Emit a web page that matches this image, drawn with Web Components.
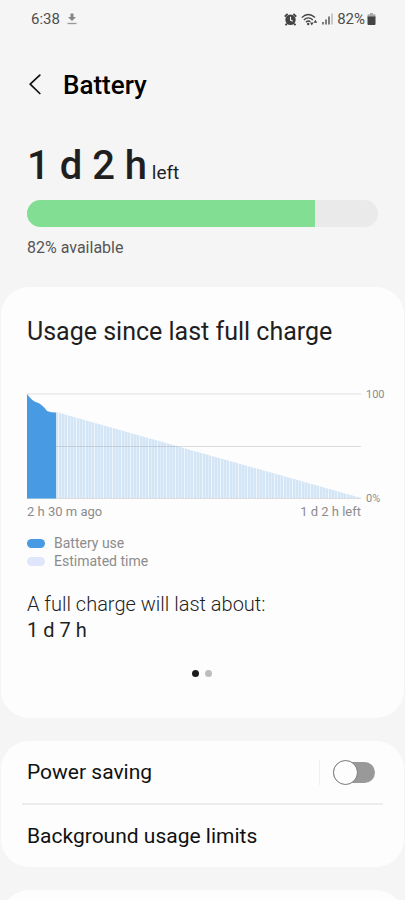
<!DOCTYPE html>
<html lang="en">
<head>
<meta charset="utf-8">
<meta name="viewport" content="width=device-width, initial-scale=1">
<title>Battery</title>
<style>
  body { margin: 0; background: #f5f5f5; color: #1f1f1f; font-family: Roboto, "Liberation Sans", sans-serif; }
</style>
</head>
<body>
<battery-page></battery-page>
<script>
  const define = (name, html, setup) => {
    const template = document.createElement('template');
    template.innerHTML = html;
    customElements.define(name, class extends HTMLElement {
      constructor() {
        super();
        this.attachShadow({ mode: 'open' }).append(template.content.cloneNode(true));
      }
      connectedCallback() { if (setup) setup(this, this.shadowRoot); }
    });
  };

  define('status-bar', `
    <style>
      :host { display: flex; justify-content: space-between; align-items: center; height: 38px; padding: 0 29px 0 31px; font-size: 15px; line-height: 20px; color: #4d4d4d; }
      div { display: flex; align-items: center; }
      .left { gap: 7px; }
      .right { gap: 4px; }
      .charge { gap: 2px; }
      svg { display: block; }
    </style>
    <div class="left">
      <span>6:38</span>
      <svg width="10" height="12" viewBox="0 0 10 12" aria-hidden="true"><path d="M3.5 0.5h3V4H9L5 8 1 4h2.5z" fill="#858585"/><path d="M0.5 10.5h9" stroke="#999" stroke-width="1.3"/></svg>
    </div>
    <div class="right">
      <svg width="13" height="13" viewBox="0 0 13 13" aria-hidden="true"><circle cx="6.5" cy="6.8" r="5.2" fill="#444"/><path d="M0.8 3.6 3.6 0.9M12.2 3.6 9.4 0.9M2.8 10.6 1.6 12.2M10.2 10.6l1.2 1.6" stroke="#444" stroke-width="1.900"/><path d="M6.5 3.8v3.3l2.2 1.2" fill="none" stroke="#f5f5f5" stroke-width="1.1"/></svg>
      <svg width="17" height="13" viewBox="0 0 17 13" aria-hidden="true"><g fill="none" stroke="#444" stroke-width="1.3"><path d="M0.7 4.6Q7.3-1.6 14 4.6"/><path d="M2.8 7Q7.3 2.8 11.9 7"/><path d="M4.9 9.2Q7.3 7 9.4 8.8"/></g><circle cx="7.2" cy="11" r="1.2" fill="#444"/><path d="M9 9.400h3.600l-1.800 3zM12.600 9.700h3.600l-1.800-3z" fill="#444"/></svg>
      <svg width="11" height="12" viewBox="0 0 11 12" aria-hidden="true"><path d="M1 9v2.5M4 6.5v5M7 3.5v8" stroke="#555" stroke-width="1.5"/><path d="M10 0.5v11" stroke="#bbb" stroke-width="1.5"/></svg>
      <div class="charge">
        <span>82%</span>
        <svg width="9" height="12" viewBox="0 0 9 12" aria-hidden="true"><path d="M3 0h3v1.2h1.5q1 0 1 1V4h-8V2.200q0-1 1-1H3z" fill="#aaa"/><path d="M0.500 3.500h8V11q0 1-1 1h-6q-1 0-1-1z" fill="#444"/></svg>
      </div>
    </div>`);

  define('page-header', `
    <style>
      :host { display: flex; align-items: center; gap: 14px; padding: 27px 21px 0; }
      button { display: grid; place-items: center; width: 28px; height: 40px; padding: 0; border: 0; background: none; color: #111; }
      h1 { margin: 0; font-size: 26px; line-height: 40px; font-weight: 500; color: #000; }
      svg { display: block; }
    </style>
    <button type="button" aria-label="Back"><svg width="12" height="22" viewBox="0 0 12 22"><path d="M10.800 1.200 1.200 10.200 10.800 19.500" fill="none" stroke="currentColor" stroke-width="1.7" stroke-linecap="round" stroke-linejoin="round"/></svg></button>
    <h1><slot></slot></h1>`);

  define('battery-level', `
    <style>
      :host { display: block; padding: 37px 27px 28px; }
      p { margin: 0; }
      .time { font-size: 19px; line-height: 48px; }
      strong { font-size: 40px; font-weight: 500; }
      .bar { height: 27px; margin: 3px 0 10px; border-radius: 14px; background: #eaeaea; overflow: hidden; }
      .fill { width: 82%; height: 100%; background: #82de92; }
      .note { font-size: 16px; line-height: 22px; color: #555; }
    </style>
    <p class="time"><strong><slot name="time"></slot></strong> <slot name="suffix"></slot></p>
    <div class="bar" role="img" aria-label="Battery level"><div class="fill"></div></div>
    <p class="note"><slot></slot></p>`);

  define('round-card', `
    <style>
      :host { display: block; margin: 0 1px; border-radius: 28px; background: #fdfdfd; }
    </style>
    <slot></slot>`);

  define('usage-chart', `
    <style>
      :host { display: grid; grid-template-columns: 1fr 20px; column-gap: 5px; color: #8c8c8c; font-size: 13px; line-height: 18px; }
      svg { display: block; width: 100%; height: 106px; }
      .scale { display: flex; flex-direction: column; justify-content: space-between; font-size: 11px; line-height: 12px; margin: -4px 0 -6px; }
      .ends { display: flex; justify-content: space-between; padding-top: 4px; }
    </style>
    <svg viewBox="0 0 334 106" preserveAspectRatio="none" role="img" aria-label="Battery level over time">
      <defs><clipPath id="est"><path d="M29 19 334 105H29z"/></clipPath></defs>
      <path d="M0 1h334" stroke="#e8e8e8" stroke-width="1.500"/>
      <g clip-path="url(#est)"><rect width="334" height="106" fill="#d4e6f6"/><g id="gaps"></g></g>
      <path d="M0 53.500h334M0 105.500h334" stroke="#777" stroke-opacity=".24"/>
      <path d="M0 1Q5 8 10 9.500T20 18Q24 19.500 29 19.500V105.500H0z" fill="#489be3"/>
    </svg>
    <div class="scale"><span>100</span><span>0%</span></div>
    <div class="ends"><span>2 h 30 m ago</span><span>1 d 2 h left</span></div>`,
    (host, root) => {
      const group = root.getElementById('gaps');
      for (let i = 0; i < 101; i++) {
        const gap = document.createElementNS('http://www.w3.org/2000/svg', 'rect');
        gap.setAttribute('x', 31 + i * 3);
        gap.setAttribute('width', 1);
        gap.setAttribute('height', 106);
        gap.setAttribute('fill', i % 3 ? '#e1edf8' : '#eff6fb');
        group.append(gap);
      }
    });

  define('legend-item', `
    <style>
      :host { display: flex; align-items: center; gap: 9px; font-size: 14px; line-height: 18px; color: #8c8c8c; }
      i { width: 18px; height: 9px; border-radius: 5px; background: var(--swatch); }
    </style>
    <i></i><span><slot></slot></span>`);

  define('usage-summary', `
    <style>
      :host { display: block; padding: 29px 18px 41px 26px; }
      h2 { margin: 0 0 45px; font-size: 25px; line-height: 32px; font-weight: 400; }
      .legend { padding: 13px 0 21px; }
      p { margin: 0; font-size: 20px; line-height: 26px; }
      .light { font-weight: 300; }
      .pages { display: flex; justify-content: center; gap: 6px; padding: 27px 9px 0 0; }
      .pages button { width: 7px; height: 7px; padding: 0; border: 0; border-radius: 50%; background: #bdbdbd; }
      .pages button[aria-current] { background: #1c1c1c; }
    </style>
    <h2>Usage since last full charge</h2>
    <usage-chart></usage-chart>
    <div class="legend">
      <legend-item style="--swatch:#489be3">Battery use</legend-item>
      <legend-item style="--swatch:#dfe6fb">Estimated time</legend-item>
    </div>
    <p class="light">A full charge will last about:</p>
    <p>1 d 7 h</p>
    <div class="pages"><button type="button" aria-label="Page 1" aria-current="true"></button><button type="button" aria-label="Page 2"></button></div>`);

  define('toggle-switch', `
    <style>
      :host { display: flex; align-items: center; padding-left: 13px; border-left: 1px solid #f0f0f0; }
      input { appearance: none; display: flex; align-items: center; width: 42px; height: 21px; margin: 2px 0; border-radius: 11px; background: #999; }
      input::before { content: ""; box-sizing: border-box; width: 25px; height: 25px; flex: none; border: 1px solid #777; border-radius: 50%; background: #fdfdfd; }
      input:checked { justify-content: flex-end; background: #489be3; }
    </style>
    <input type="checkbox" role="switch" aria-label="Power saving">`);

  define('setting-rows', `
    <style>
      :host { display: block; padding: 0 21px; font-size: 21px; line-height: 26px; color: #111; }
      .row { display: flex; justify-content: space-between; align-items: center; height: 62px; padding: 0 8px 0 5px; }
      .row + .row { border-top: 2px solid #ececec; }
      a { color: inherit; text-decoration: none; }
    </style>
    <div class="row"><a href="#power-saving">Power saving</a><toggle-switch></toggle-switch></div>
    <div class="row"><a href="#background-limits">Background usage limits</a></div>`);

  define('battery-page', `
    <style>
      :host { display: flex; flex-direction: column; height: 100vh; overflow-y: auto; scrollbar-width: none; }
      :host > * { flex: none; }
      status-bar, page-header, battery-level, main { flex: none; }
      main { display: flex; flex-direction: column; gap: 23px; }
      .next { height: 64px; }
    </style>
    <status-bar></status-bar>
    <page-header>Battery</page-header>
    <battery-level><span slot="time">1 d 2 h</span><span slot="suffix">left</span>82% available</battery-level>
    <main>
      <round-card><usage-summary></usage-summary></round-card>
      <round-card><setting-rows></setting-rows></round-card>
      <round-card class="next"></round-card>
    </main>`);
</script>
</body>
</html>
